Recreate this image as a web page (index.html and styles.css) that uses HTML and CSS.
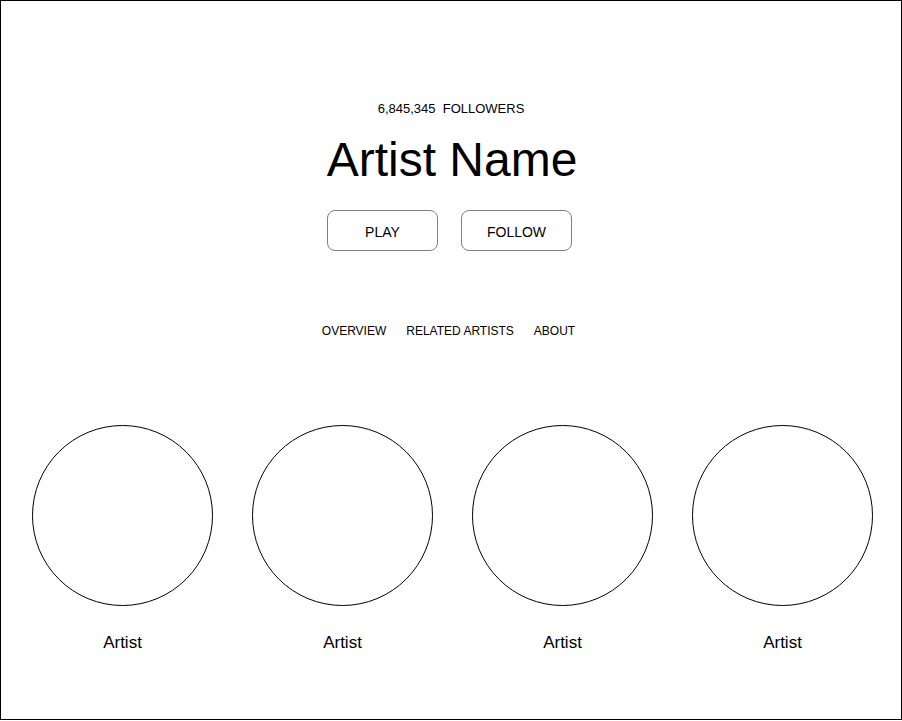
FILE: index.html
```html
<!DOCTYPE html>
<html lang="en">
<head>
<meta charset="utf-8">
<title>Artist Name</title>
<link rel="stylesheet" href="styles.css">
</head>
<body>
<div class="frame">
  <header class="hero">
    <div class="followers">6,845,345&nbsp;&nbsp;FOLLOWERS</div>
    <h1 class="title">Artist Name</h1>
    <div class="actions">
      <button class="btn">PLAY</button>
      <button class="btn">FOLLOW</button>
    </div>
  </header>
  <nav class="tabs">
    <a class="tab">OVERVIEW</a>
    <a class="tab">RELATED ARTISTS</a>
    <a class="tab">ABOUT</a>
  </nav>
  <section class="artists">
    <div class="artist"><div class="avatar"></div><div class="name">Artist</div></div>
    <div class="artist"><div class="avatar"></div><div class="name">Artist</div></div>
    <div class="artist"><div class="avatar"></div><div class="name">Artist</div></div>
    <div class="artist"><div class="avatar"></div><div class="name">Artist</div></div>
  </section>
</div>
</body>
</html>
```
FILE: styles.css
```css
* { box-sizing: border-box; }
html, body { margin: 0; padding: 0; background: #fff; }
body { font-family: "Liberation Sans", Arial, sans-serif; color: #000; }

.frame {
  width: 902px;
  height: 720px;
  border: 1px solid #000;
  padding-top: 100px;
  display: flex;
  flex-direction: column;
}

.hero {
  display: flex;
  flex-direction: column;
  align-items: center;
}

.followers {
  font-size: 13px;
  line-height: 16px;
}

.title {
  margin: 15px 0 0;
  padding-left: 2px;
  font-size: 48px;
  line-height: 56px;
  font-weight: normal;
}

.actions {
  margin-top: 22px;
  display: flex;
  gap: 23px;
  padding-right: 3px;
}

.btn {
  width: 111px;
  height: 41px;
  border: 1px solid #808080;
  border-radius: 8px;
  background: #fff;
  font-family: "Liberation Sans", Arial, sans-serif;
  font-size: 14px;
  color: #000;
  padding: 2px 0 0;
}

.tabs {
  margin-top: 72px;
  display: flex;
  justify-content: center;
  gap: 20px;
  padding-right: 5px;
}

.tab {
  font-size: 12px;
  line-height: 16px;
}

.artists {
  margin-top: 86px;
  padding-left: 31px;
  display: grid;
  grid-template-columns: repeat(4, 181px);
  column-gap: 39px;
}

.artist {
  display: flex;
  flex-direction: column;
  align-items: center;
}

.avatar {
  width: 181px;
  height: 181px;
  border: 1px solid #000;
  border-radius: 50%;
}

.name {
  margin-top: 27px;
  font-size: 17px;
  line-height: 20px;
}
```
